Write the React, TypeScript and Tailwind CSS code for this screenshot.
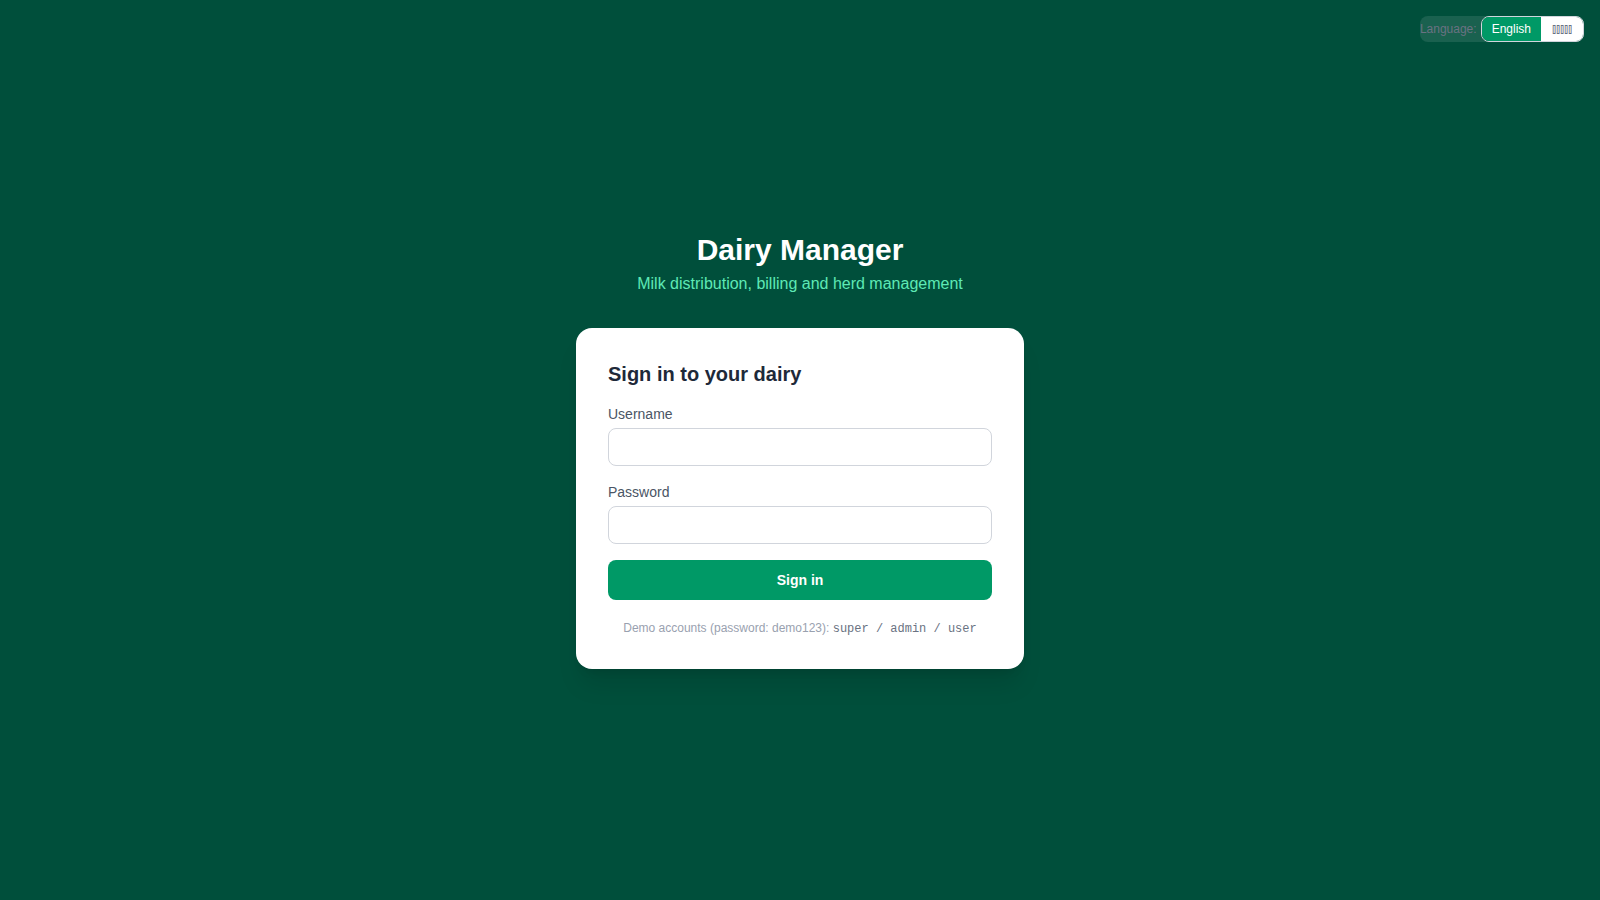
import { useState } from 'react'
import clsx from 'clsx'

const LANGUAGES = [
  { code: 'en', label: 'English', cls: 'px-2.5 text-xs' },
  { code: 'local', label: '⫾⫾⫾⫾⫾', cls: 'px-[11px] text-[13px] leading-4' },
]

function LanguageToggle() {
  const [lang, setLang] = useState('en')

  return (
    <div className="flex items-center gap-1 rounded-lg bg-white/10 text-xs">
      <span className="text-gray-500">Language:</span>
      <div className="flex overflow-hidden rounded-lg border border-gray-300">
        {LANGUAGES.map(l => (
          <button
            key={l.code}
            type="button"
            onClick={() => setLang(l.code)}
            className={clsx(
              'py-1',
              l.cls,
              lang === l.code ? 'bg-emerald-600 text-white' : 'bg-white text-gray-500 hover:bg-gray-50'
            )}
          >
            {l.label}
          </button>
        ))}
      </div>
    </div>
  )
}

export default function App() {
  const [username, setUsername] = useState('')
  const [password, setPassword] = useState('')

  return (
    <div className="relative min-h-screen bg-emerald-900 flex items-center justify-center p-4 font-['Liberation_Sans',sans-serif]">
      <div className="absolute top-4 right-4">
        <LanguageToggle />
      </div>

      <div className="w-full max-w-md">
        <div className="text-center mb-8">
          <h1 className="text-3xl font-bold text-white">Dairy Manager</h1>
          <p className="text-emerald-300 mt-1">Milk distribution, billing and herd management</p>
        </div>

        {/* Card */}
        <form
          onSubmit={e => e.preventDefault()}
          className="bg-white rounded-2xl shadow-xl p-8 space-y-4"
        >
          <h2 className="text-xl font-semibold text-gray-800">Sign in to your dairy</h2>

          <div>
            <label htmlFor="username" className="block text-sm text-gray-600 mb-1">Username</label>
            <input
              id="username"
              type="text"
              value={username}
              onChange={e => setUsername(e.target.value)}
              className="block w-full border border-gray-300 rounded-lg px-3 py-2 text-sm focus:outline-none focus:ring-2 focus:ring-emerald-500"
            />
          </div>

          <div>
            <label htmlFor="password" className="block text-sm text-gray-600 mb-1">Password</label>
            <input
              id="password"
              type="password"
              value={password}
              onChange={e => setPassword(e.target.value)}
              className="block w-full border border-gray-300 rounded-lg px-3 py-2 text-sm focus:outline-none focus:ring-2 focus:ring-emerald-500"
            />
          </div>

          <button
            type="submit"
            className="w-full bg-emerald-600 hover:bg-emerald-700 text-white text-sm font-semibold rounded-lg py-2.5"
          >
            Sign in
          </button>

          <p className="pt-1 text-center text-xs text-gray-400">
            Demo accounts (password: demo123):{' '}
            <span className="font-['Liberation_Mono',monospace] text-gray-500">super / admin / user</span>
          </p>
        </form>
      </div>
    </div>
  )
}
